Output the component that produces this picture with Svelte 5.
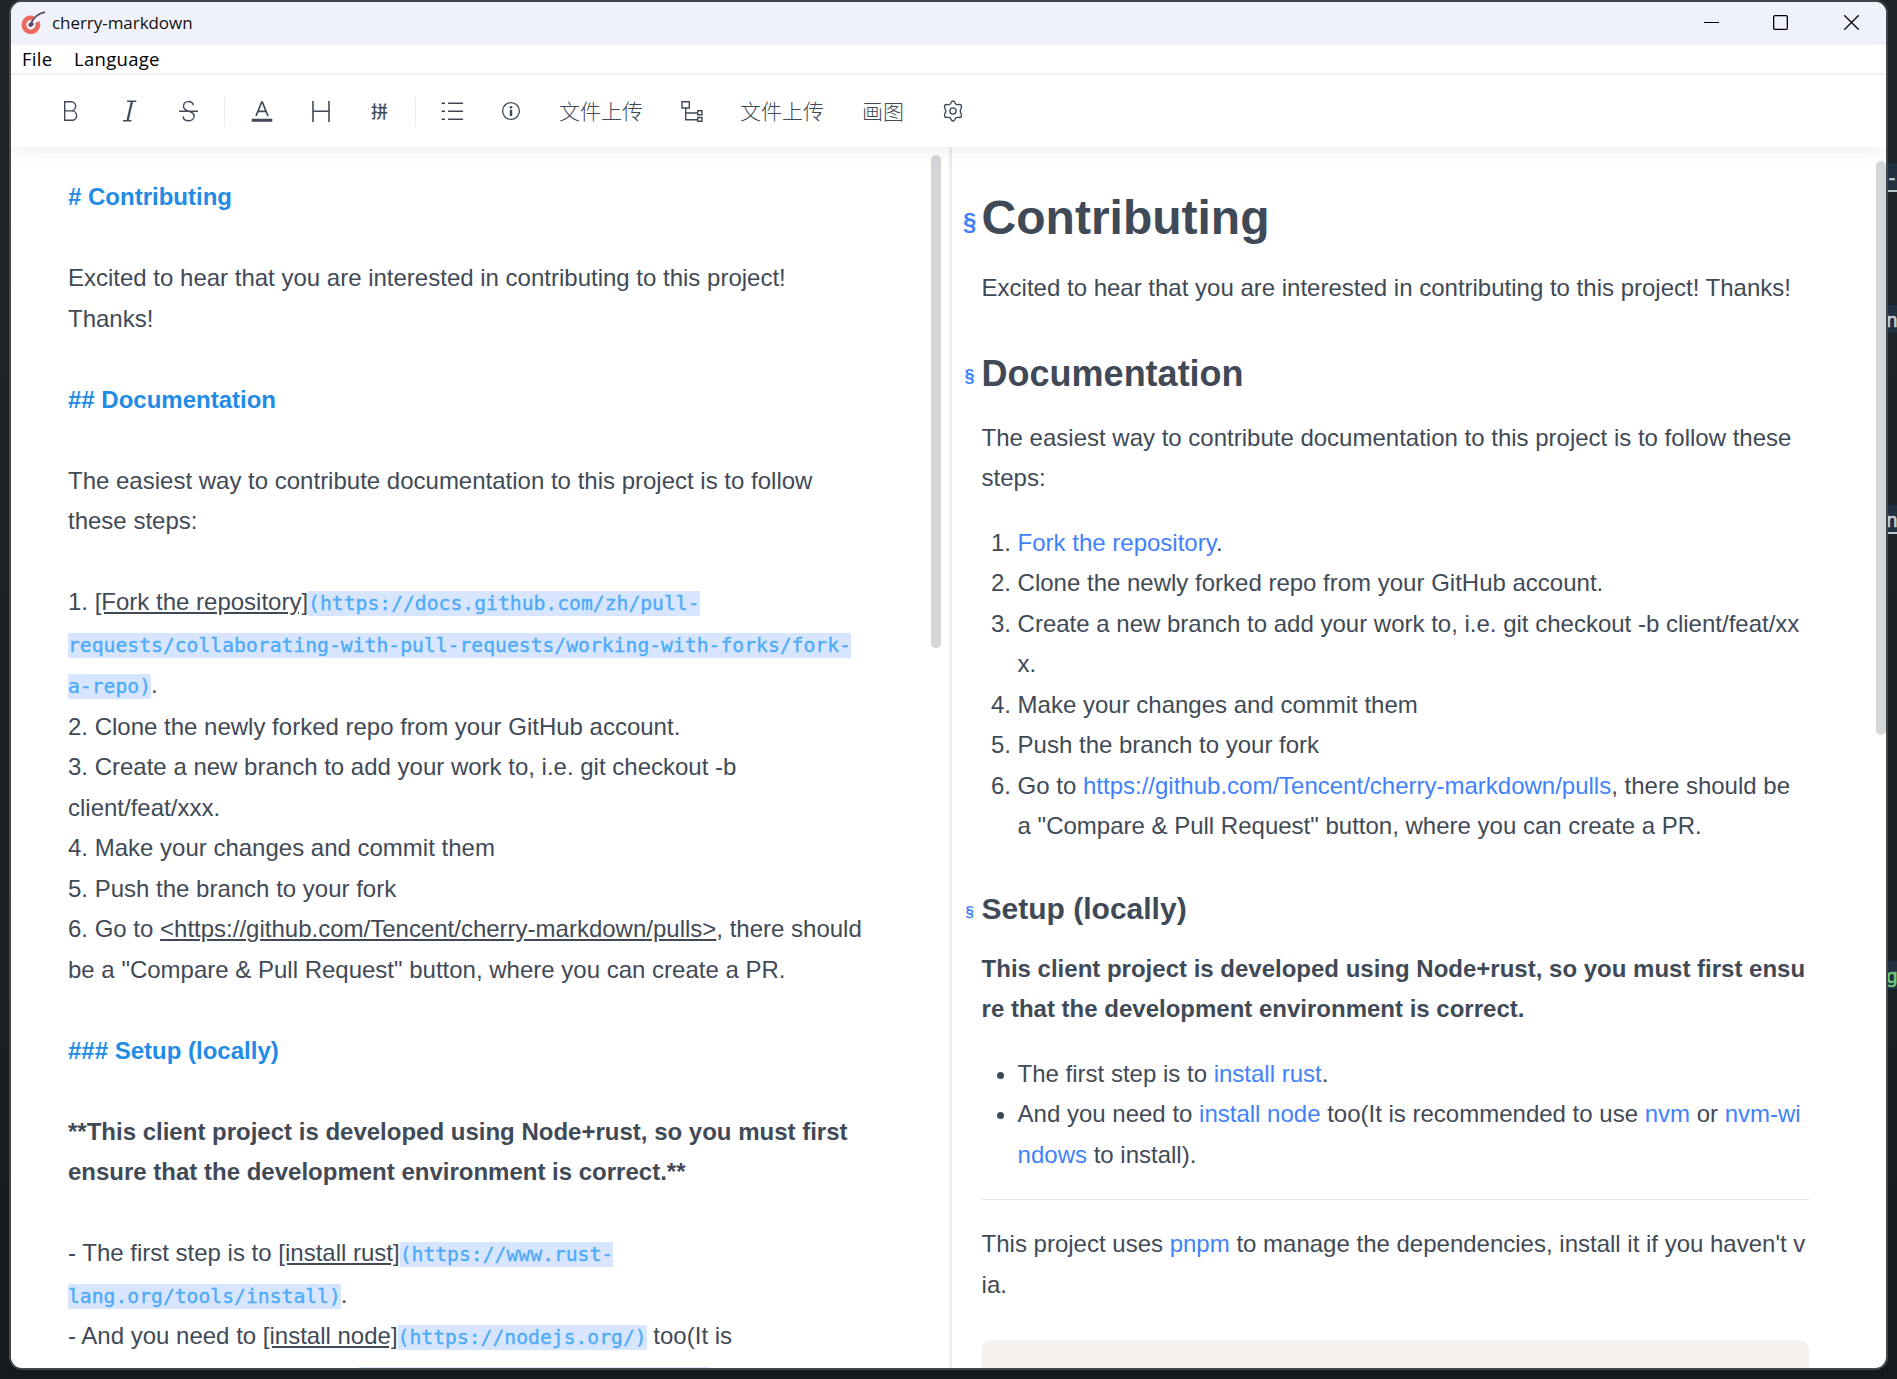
<script>
  const editorLines = [
    [{ t: '# Contributing', k: 'head' }],
    [],
    [{ t: 'Excited to hear that you are interested in contributing to this project!' }],
    [{ t: 'Thanks!' }],
    [],
    [{ t: '## Documentation', k: 'head' }],
    [],
    [{ t: 'The easiest way to contribute documentation to this project is to follow' }],
    [{ t: 'these steps:' }],
    [],
    [{ t: '1. ' }, { t: '[Fork the repository]', k: 'link' }, { t: '(https://docs.github.com/zh/pull-', k: 'url' }],
    [{ t: 'requests/collaborating-with-pull-requests/working-with-forks/fork-', k: 'url' }],
    [{ t: 'a-repo)', k: 'url' }, { t: '.' }],
    [{ t: '2. Clone the newly forked repo from your GitHub account.' }],
    [{ t: '3. Create a new branch to add your work to, i.e. git checkout -b' }],
    [{ t: 'client/feat/xxx.' }],
    [{ t: '4. Make your changes and commit them' }],
    [{ t: '5. Push the branch to your fork' }],
    [{ t: '6. Go to ' }, { t: '<https://github.com/Tencent/cherry-markdown/pulls>', k: 'link' }, { t: ', there should' }],
    [{ t: 'be a "Compare & Pull Request" button, where you can create a PR.' }],
    [],
    [{ t: '### Setup (locally)', k: 'head' }],
    [],
    [{ t: '**This client project is developed using Node+rust, so you must first', k: 'strong' }],
    [{ t: 'ensure that the development environment is correct.**', k: 'strong' }],
    [],
    [{ t: '- The first step is to ' }, { t: '[install rust]', k: 'link' }, { t: '(https://www.rust-', k: 'url' }],
    [{ t: 'lang.org/tools/install)', k: 'url' }, { t: '.' }],
    [{ t: '- And you need to ' }, { t: '[install node]', k: 'link' }, { t: '(https://nodejs.org/)', k: 'url' }, { t: ' too(It is' }]
  ];
  const hasUrl = (line) => line.some((s) => s.k === 'url');
</script>

<div class="desktop">
  <div class="behind b1">-</div>
  <div class="behind b2">n</div>
  <div class="behind b3">n</div>
  <div class="behind b4">g</div>

  <div class="window">
    <header class="titlebar">
      <svg class="logo" width="25" height="24" viewBox="0 0 25 24">
        <path d="M12.5 7.3A7 7 0 1 0 16.3 11" fill="none" stroke="#ec6a62" stroke-width="4.6" />
        <path d="M24 1.2C17 2.5 12.5 7 10 12.5" fill="none" stroke="#5d4560" stroke-width="1.7" />
        <ellipse cx="10" cy="13.5" rx="2.8" ry="2" transform="rotate(-35 10 13.5)" fill="#5d4560" />
      </svg>
      <span class="title">cherry-markdown</span>
      <div class="controls">
        <svg width="15" height="15" viewBox="0 0 15 15"><path d="M0 7.5H15" stroke="#000" /></svg>
        <svg class="maximize" width="15" height="15" viewBox="0 0 15 15"><rect x=".65" y=".65" width="13.7" height="13.7" rx="1.3" fill="none" stroke="#000" stroke-width="1.3" /></svg>
        <svg width="15" height="15" viewBox="0 0 15 15"><path d="M.3.3 14.7 14.7M14.7.3.3 14.7" stroke="#000" stroke-width="1.3" /></svg>
      </div>
    </header>

    <nav class="menubar"><span>File</span><span>Language</span></nav>

    <div class="toolbar">
      <button aria-label="Bold">
        <svg viewBox="0 0 22 22"><path d="M4.7 1.7H11.2A4.4 4.6 0 0 1 11.2 10.9H4.7ZM4.7 10.9H12A4.6 4.7 0 0 1 12 20.3H4.7Z" /></svg>
      </button>
      <button aria-label="Italic">
        <svg viewBox="0 0 22 22"><path d="M8 1.3H17.3M4 20.7H12.5" /><path d="M13 1.3 8.5 20.7" stroke-width="2.2" /></svg>
      </button>
      <button aria-label="Strikethrough">
        <svg viewBox="0 0 22 22"><path d="M1 11.3H20M15.3 5.5C14.7.2 5.5.1 5.5 6.2 5.5 9.5 8.2 10.3 10.7 11.2 13.7 12.2 16.2 13 16.2 16 16.2 22.2 5.7 22.4 5 16.3" /></svg>
      </button>
      <i class="sep wide"></i>
      <button aria-label="Font color">
        <svg viewBox="0 0 22 22"><path d="M5 16 10.7 2 11.3 2 17 16M7.3 11.3H14.7" stroke-width="1.7" /><path d="M.7 20.3H21.3" stroke-width="3" /></svg>
      </button>
      <button aria-label="Heading">
        <svg viewBox="0 0 22 22"><path d="M3 1V22M19 1V22M3 11.2H19" stroke-width="1.6" /></svg>
      </button>
      <button aria-label="Pinyin"><span class="py">拼</span></button>
      <i class="sep"></i>
      <button aria-label="List">
        <svg viewBox="0 0 22 22"><path d="M.5 3.3H4M.5 11.3H4M.5 19.2H4M7 3.3H22M7 11.3H22M7 19.2H22" stroke-width="1.5" /></svg>
      </button>
      <button aria-label="Info">
        <svg viewBox="0 0 22 22"><circle cx="11" cy="11" r="8.4" stroke-width="1.3" /><circle cx="11" cy="7.2" r="1.3" class="solid" /><path d="M11 9.8V16" stroke-width="2.4" /></svg>
      </button>
      <button>文件上传</button>
      <button aria-label="Diagram">
        <svg viewBox="0 0 22 22"><path d="M1 1.7H8.3V8H1ZM4.7 8V19.7H16.5M4.7 13H16.5M16.7 10.8H21V14.8H16.7ZM16.7 17.5H21V21.3H16.7Z" /></svg>
      </button>
      <button>文件上传</button>
      <button>画图</button>
      <button aria-label="Settings">
        <svg viewBox="0 0 22 22"><path d="M11 1C13 1 12.8 3.6 14.2 4.4 15.7 5.3 18 3.7 19.2 5.2 20.6 7.4 18.2 8.9 18.2 11 18.2 13.1 20.6 14.6 19.2 16.8 18 18.3 15.7 16.7 14.2 17.6 12.8 18.4 13 21 11 21 9 21 9.2 18.4 7.8 17.6 6.3 16.7 4 18.3 2.8 16.8 1.4 14.6 3.8 13.1 3.8 11 3.8 8.9 1.4 7.4 2.8 5.2 4 3.7 6.3 5.3 7.8 4.4 9.2 3.6 9 1 11 1Z" /><circle cx="11" cy="11" r="3.1" /></svg>
      </button>
    </div>

    <main>
      <section class="editor">
        <div class="source">
          {#each editorLines as line}
            <div class="line" class:tall={hasUrl(line)}>{#each line as s}<span class={s.k ?? 'plain'}>{s.t}</span>{/each}</div>
          {/each}
          <div class="next-url"></div>
        </div>
        <div class="thumb"></div>
      </section>

      <section class="preview">
        <article>
          <h1><a class="anchor" href="#contributing">§</a>Contributing</h1>
          <p>Excited to hear that you are interested in contributing to this project! Thanks!</p>
          <h2><a class="anchor" href="#documentation">§</a>Documentation</h2>
          <p>The easiest way to contribute documentation to this project is to follow these<br />steps:</p>
          <ol>
            <li><a href="#fork">Fork the repository</a>.</li>
            <li>Clone the newly forked repo from your GitHub account.</li>
            <li>Create a new branch to add your work to, i.e. git checkout -b client/feat/xx<br />x.</li>
            <li>Make your changes and commit them</li>
            <li>Push the branch to your fork</li>
            <li>Go to <a href="#pulls">https://github.com/Tencent/cherry-markdown/pulls</a>, there should be<br />a "Compare &amp; Pull Request" button, where you can create a PR.</li>
          </ol>
          <h3><a class="anchor" href="#setup">§</a>Setup (locally)</h3>
          <p><strong>This client project is developed using Node+rust, so you must first ensu<br />re that the development environment is correct.</strong></p>
          <ul>
            <li>The first step is to <a href="#rust">install rust</a>.</li>
            <li>And you need to <a href="#node">install node</a> too(It is recommended to use <a href="#nvm">nvm</a> or <a href="#nvmw">nvm-wi<br />ndows</a> to install).</li>
          </ul>
          <hr />
          <p>This project uses <a href="#pnpm">pnpm</a> to manage the dependencies, install it if you haven't v<br />ia.</p>
          <div class="code"></div>
        </article>
        <div class="thumb"></div>
      </section>
    </main>
  </div>
</div>

<style>
  :global(body) { margin: 0; background: #1b1f22; }
  .desktop {
    position: relative;
    box-sizing: border-box;
    width: 1897px;
    height: 1379px;
    padding: 0 9px;
    overflow: hidden;
    background: linear-gradient(#202529, #1b2023 70%, #15191c);
    font-family: "Liberation Sans", Arial, "Noto Sans CJK SC", sans-serif;
    color: #3f4a56;
  }
  .behind {
    position: absolute;
    left: 1887px;
    width: 10px;
    height: 28px;
    overflow: hidden;
    background: #213040;
    color: #c5cdd4;
    font: 20px/30px "DejaVu Sans Mono", monospace;
    -webkit-text-stroke: .5px;
    text-indent: -1px;
    box-sizing: border-box;
  }
  .b1 { top: 163px; height: 29px; border-bottom: 2px solid #b9c3c9; }
  .b2 { top: 305px; }
  .b3 { top: 505px; height: 29px; border-bottom: 2px solid #b4cbdc; }
  .b4 { top: 961px; color: #6fca78; }

  .window {
    position: relative;
    box-sizing: border-box;
    width: 1879px;
    height: 1370px;
    display: flex;
    flex-direction: column;
    overflow: hidden;
    border: 2px solid #43474a;
    border-radius: 13px;
    background: #fff;
  }
  .titlebar {
    flex: none;
    box-sizing: border-box;
    height: 43px;
    display: flex;
    align-items: center;
    padding: 0 27px 2px 10px;
    background: #eff2fa;
    color: #111;
  }
  .logo { flex: none; }
  .title { margin-left: 6px; font: 17px/24px "Open Sans", "Noto Sans", sans-serif; letter-spacing: -.05px; }
  .controls { margin-left: auto; display: flex; gap: 55px; }
  .maximize { margin: 0 1px 0 -1px; }
  .menubar {
    flex: none;
    height: 28px;
    border-bottom: 2px solid #f0f0f0;
    padding-left: 11px;
    display: flex;
    align-items: center;
    gap: 21.5px;
    color: #000;
    font: 18.5px/28px "Open Sans", "Noto Sans", sans-serif;
    letter-spacing: .3px;
  }
  .toolbar {
    position: relative;
    z-index: 1;
    flex: none;
    height: 72px;
    display: flex;
    align-items: center;
    padding-left: 30px;
    background: #fff;
    clip-path: inset(0 0 -30px 0);
    box-shadow: 0 0 20px rgba(60, 75, 95, .13);
  }
  button {
    flex: none;
    min-width: 59px;
    padding: 0 19px 2px;
    height: 45px;
    display: flex;
    align-items: center;
    justify-content: center;
    border: 0;
    background: none;
    color: #3f4a56;
    font: 300 21px/43px "Noto Sans CJK SC", sans-serif;
  }
  button svg { width: 22px; height: 22px; flex: none; margin: 2px -1px 0; fill: none; stroke: #3f4a56; stroke-width: 1.4; }
  .solid { fill: #3f4a56; stroke: none; }
  .py { font-size: 17px; font-weight: 500; }
  .sep { flex: none; width: 1px; height: 29px; margin: 0 6px; background: #e9ebef; }
  .wide { margin-right: 7px; }

  main { flex: 1; min-height: 0; display: flex; }
  section { position: relative; overflow: hidden; }
  .editor { flex: none; width: 938px; border-right: 3px solid #ebedee; }
  .source { padding: 30px 0 0 57px; font-size: 24px; line-height: 40.5px; }
  .line { height: 40.5px; white-space: pre; }
  .tall { height: 41.6px; }
  .head { color: #228be6; font-weight: 700; }
  .strong { font-weight: 700; }
  .link { text-decoration: underline; }
  .url {
    padding: 1px 0;
    background: #d7e5ff;
    color: #4dabf7;
    font: 19.72px/20px "DejaVu Sans Mono", monospace;
    -webkit-text-stroke: .35px #4dabf7;
  }
  .next-url { width: 351px; height: 25px; margin: 9px 0 0 291px; background: #d7e5ff; }
  .thumb { position: absolute; width: 10px; border-radius: 5px; background: #d3d7da; }
  .editor .thumb { right: 8px; top: 8px; height: 493px; }
  .preview { flex: 1; }
  .preview .thumb { right: 0; top: 14px; height: 574px; }
  article { padding: 36.5px 77px 0 29.6px; font-size: 24px; line-height: 40.5px; white-space: nowrap; }
  h1, h2, h3 { position: relative; line-height: 1.4; }
  h1 { margin: 0 0 17.7px; font-size: 48px; }
  h2 { margin: 39.7px 0 18.8px; font-size: 36px; }
  h3 { margin: 41px 0 19px; font-size: 30px; }
  p { margin: 0 0 24px; }
  ol, ul { margin: 0 0 24px; padding-left: 36px; }
  a { color: #3f82fb; text-decoration: none; }
  .anchor { position: absolute; left: -25px; width: 26px; top: .16em; text-align: center; font-size: .5em; line-height: 2.8em; }
  h1 .anchor { top: .2em; }
  hr { height: 1px; margin: 0 0 24px; border: 0; background: #e3e5e8; }
  .code { margin-top: 34.5px; height: 60px; border-radius: 9px; background: #f5f1ee; }
</style>
